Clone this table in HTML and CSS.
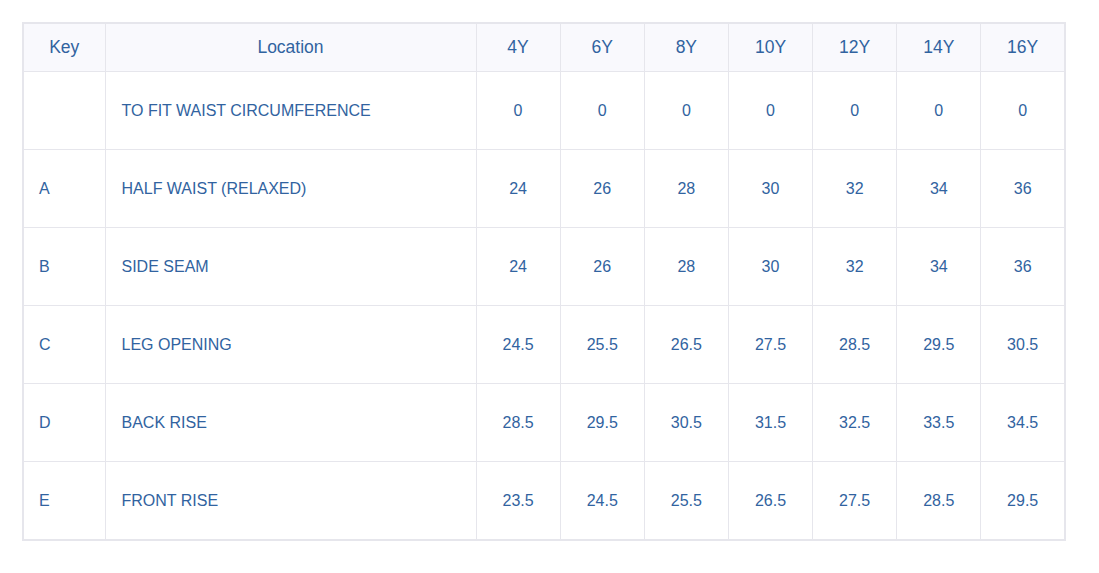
FILE: index.html
```html
<!DOCTYPE html>
<html>
<head>
<meta charset="utf-8">
<link rel="stylesheet" href="styles.css">
</head>
<body>
<div class="wrap">
<table class="size-table">
  <colgroup>
    <col class="c-key"><col class="c-loc"><col class="c-size"><col class="c-size"><col class="c-size"><col class="c-size"><col class="c-size"><col class="c-size"><col class="c-size">
  </colgroup>
  <thead>
    <tr><th>Key</th><th>Location</th><th>4Y</th><th>6Y</th><th>8Y</th><th>10Y</th><th>12Y</th><th>14Y</th><th>16Y</th></tr>
  </thead>
  <tbody>
    <tr><td></td><td class="loc">TO FIT WAIST CIRCUMFERENCE</td><td class="n">0</td><td class="n">0</td><td class="n">0</td><td class="n">0</td><td class="n">0</td><td class="n">0</td><td class="n">0</td></tr>
    <tr><td>A</td><td class="loc">HALF WAIST (RELAXED)</td><td class="n">24</td><td class="n">26</td><td class="n">28</td><td class="n">30</td><td class="n">32</td><td class="n">34</td><td class="n">36</td></tr>
    <tr><td>B</td><td class="loc">SIDE SEAM</td><td class="n">24</td><td class="n">26</td><td class="n">28</td><td class="n">30</td><td class="n">32</td><td class="n">34</td><td class="n">36</td></tr>
    <tr><td>C</td><td class="loc">LEG OPENING</td><td class="n">24.5</td><td class="n">25.5</td><td class="n">26.5</td><td class="n">27.5</td><td class="n">28.5</td><td class="n">29.5</td><td class="n">30.5</td></tr>
    <tr><td>D</td><td class="loc">BACK RISE</td><td class="n">28.5</td><td class="n">29.5</td><td class="n">30.5</td><td class="n">31.5</td><td class="n">32.5</td><td class="n">33.5</td><td class="n">34.5</td></tr>
    <tr><td>E</td><td class="loc">FRONT RISE</td><td class="n">23.5</td><td class="n">24.5</td><td class="n">25.5</td><td class="n">26.5</td><td class="n">27.5</td><td class="n">28.5</td><td class="n">29.5</td></tr>
  </tbody>
</table>
</div>
</body>
</html>
```
FILE: styles.css
```css
html, body {
  margin: 0;
  padding: 0;
  background: #ffffff;
}
.wrap {
  padding: 22px;
}
.size-table {
  width: 1044px;
  border-collapse: collapse;
  table-layout: fixed;
  border: 2px solid #e6e6ec;
  font-family: "Liberation Sans", Arial, sans-serif;
  color: #3163a0;
}
.c-key { width: 82px; }
.c-loc { width: 371px; }
.size-table th {
  background: #f9f9fd;
  font-weight: normal;
  font-size: 17.5px;
  height: 47px;
  padding: 0;
  text-align: center;
  border: 1px solid #e6e6ec;
}
.size-table td {
  height: 77px;
  padding: 0 0 0 15px;
  font-size: 16px;
  text-align: left;
  border: 1px solid #e6e6ec;
}
.size-table td.loc {
  padding-left: 16px;
}
.size-table td.n {
  text-align: center;
  padding: 0;
}
```
